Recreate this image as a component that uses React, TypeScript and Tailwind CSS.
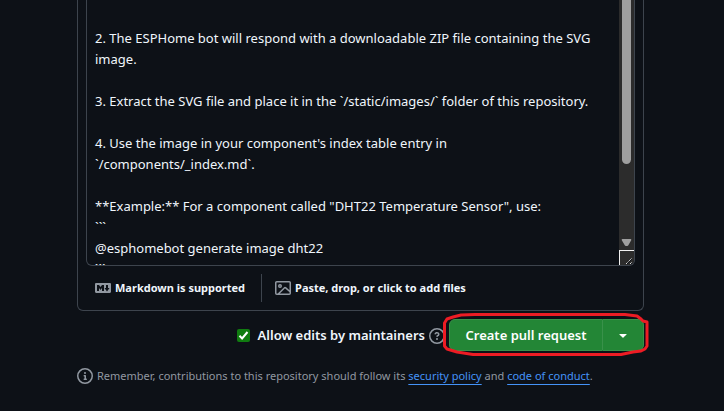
import React from "react";

const body = `
2. The ESPHome bot will respond with a downloadable ZIP file containing the SVG
image.

3. Extract the SVG file and place it in the \`/static/images/\` folder of this repository.

4. Use the image in your component's index table entry in
\`/components/_index.md\`.

**Example:** For a component called "DHT22 Temperature Sensor", use:
\`\`\`
@esphomebot generate image dht22
\`\`\``;

function MarkdownIcon() {
  return (
    <svg viewBox="0 0 16 16" className="size-4 shrink-0" fill="#9198a1" aria-hidden="true">
      <path d="M14.85 3c.63 0 1.15.52 1.14 1.15v7.7c0 .63-.51 1.15-1.15 1.15H1.15C.52 13 0 12.48 0 11.84V4.15C0 3.52.52 3 1.15 3ZM9 11V5H7L5.5 7 4 5H2v6h2V8l1.5 1.92L7 8v3Zm2.99.5L14.5 8H13V5h-2v3H9.5Z" />
    </svg>
  );
}

function ImageIcon() {
  return (
    <svg viewBox="0 0 16 16" className="size-4 shrink-0" fill="#9198a1" aria-hidden="true">
      <path d="M16 13.25A1.75 1.75 0 0 1 14.25 15H1.75A1.75 1.75 0 0 1 0 13.25V2.75C0 1.784.784 1 1.75 1h12.5c.966 0 1.75.784 1.75 1.75ZM1.75 2.5a.25.25 0 0 0-.25.25v10.5c0 .138.112.25.25.25h.94l.03-.03 6.077-6.078a1.75 1.75 0 0 1 2.412-.06L14.5 10.31V2.75a.25.25 0 0 0-.25-.25Zm12.5 11a.25.25 0 0 0 .25-.25v-.917l-4.298-3.889a.25.25 0 0 0-.344.009L4.81 13.5ZM7 6a2 2 0 1 1-3.999.001A2 2 0 0 1 7 6ZM5.5 6a.5.5 0 1 0-1 0 .5.5 0 0 0 1 0Z" />
    </svg>
  );
}

function QuestionIcon() {
  return (
    <svg viewBox="0 0 16 16" className="size-4 shrink-0" fill="#9198a1" aria-hidden="true">
      <path d="M0 8a8 8 0 1 1 16 0A8 8 0 0 1 0 8Zm8-6.5a6.5 6.5 0 1 0 0 13 6.5 6.5 0 0 0 0-13ZM6.92 6.085h.001a.749.749 0 1 1-1.342-.67c.169-.339.436-.701.849-.977C6.845 4.16 7.369 4 8 4a2.756 2.756 0 0 1 1.637.525c.503.377.863.965.863 1.725 0 .448-.115.83-.329 1.15-.205.307-.47.513-.692.662-.109.072-.22.138-.313.195l-.006.004a6.24 6.24 0 0 0-.26.16.952.952 0 0 0-.276.245.75.75 0 0 1-1.248-.832c.184-.264.42-.489.692-.661.103-.067.207-.132.313-.195l.007-.004c.1-.061.182-.11.258-.161a.969.969 0 0 0 .277-.245C8.96 6.514 9 6.427 9 6.25a.612.612 0 0 0-.262-.525A1.27 1.27 0 0 0 8 5.5c-.369 0-.595.09-.74.187a1.01 1.01 0 0 0-.34.398ZM9 11a1 1 0 1 1-2 0 1 1 0 0 1 2 0Z" />
    </svg>
  );
}

function InfoIcon() {
  return (
    <svg viewBox="0 0 16 16" className="size-4 shrink-0" fill="#9198a1" aria-hidden="true">
      <path d="M0 8a8 8 0 1 1 16 0A8 8 0 0 1 0 8Zm8-6.5a6.5 6.5 0 1 0 0 13 6.5 6.5 0 0 0 0-13ZM6.5 7.75A.75.75 0 0 1 7.25 7h1a.75.75 0 0 1 .75.75v2.75h.25a.75.75 0 0 1 0 1.5h-2a.75.75 0 0 1 0-1.5h.25v-2h-.25a.75.75 0 0 1-.75-.75ZM8 6a1 1 0 1 1 0-2 1 1 0 0 1 0 2Z" />
    </svg>
  );
}

function ScrollBar() {
  return (
    <div className="flex w-[15px] shrink-0 flex-col bg-[#2c2c2c]" aria-hidden="true">
      <div className="mx-[3px] h-[164px] rounded-b-full bg-[#9f9f9f]" />
      <div className="flex-1" />
      <svg viewBox="0 0 15 11" className="mb-0.5 h-[11px] w-[15px]">
        <path d="M3.500 2h8q1.200 0 .7 1.200L9.500 8q-.4 1-1.400 1H7q-1 0-1.400-1L2.800 3.200Q2.300 2 3.500 2Z" fill="#9f9f9f" />
      </svg>
      <svg viewBox="0 0 15 15" className="size-[15px] rounded-br-md bg-[#2c2c2c]" fill="none">
        <path d="M0 .5H15M.5 0V15" stroke="#f0f0f0" />
        <path d="M7 14 13 8M11 14l2-2" stroke="#e0e0e0" strokeDasharray="1.400 .6" />
        <path d="M8 14 13 9M12 14l1-1" stroke="#0d1117" />
      </svg>
    </div>
  );
}

export default function App() {
  return (
    <main className="min-h-screen bg-[#0d1117] pr-20 pl-[77px] font-['Noto_Sans','Open_Sans',sans-serif] text-sm text-[#f0f6fc]">
      <section className="rounded-b-md border-x border-b border-[#3d444d] px-2">
        <div className="flex overflow-hidden rounded-b-md border-x border-b border-[#3d444d]">
          <textarea
            aria-label="Pull request description"
            defaultValue={"\n" + body.slice(1)}
            wrap="off"
            className="block h-[265px] min-w-0 flex-1 resize-none overflow-hidden bg-transparent px-2 pt-[7px] text-[13px] leading-[21px] outline-none"
          />
          <ScrollBar />
        </div>
        <div className="flex h-11 items-center pl-[9px] text-[11px] font-bold">
          <button type="button" className="flex items-center gap-1">
            <MarkdownIcon />
            Markdown is supported
          </button>
          <div className="mr-[13px] ml-4 h-7 w-px bg-[#3d444d]" />
          <label className="flex items-center gap-1">
            <ImageIcon />
            Paste, drop, or click to add files
            <input type="file" className="sr-only" />
          </label>
        </div>
      </section>

      <div className="mt-2 flex items-center justify-end">
        <input
          id="maintainers"
          type="checkbox"
          defaultChecked
          className="size-[13px] appearance-none rounded-xs bg-[#107c10]"
        />
        <svg viewBox="0 0 13 13" className="pointer-events-none -ml-[13px] size-[13px]" fill="none" aria-hidden="true">
          <path d="M2.500 6.800 5.100 9.500 10.500 3" stroke="#fff" strokeWidth="2" />
        </svg>
        <label htmlFor="maintainers" className="mr-1 ml-2 text-[13px] font-semibold">
          Allow edits by maintainers
        </label>
        <a href="#help" aria-label="About maintainer edits" className="pt-0.5">
          <QuestionIcon />
        </a>
        <div className="relative ml-1 flex h-8 text-[13px] font-semibold text-white">
          <button type="button" className="w-[154px] rounded-l-md border border-[#39914a] bg-[#238636]">
            Create pull request
          </button>
          <button
            type="button"
            aria-label="More options"
            className="flex w-[41px] items-center justify-center rounded-r-md border border-l-0 border-[#39914a] bg-[#238636]"
          >
            <svg viewBox="0 0 16 16" className="size-4" fill="#fff" aria-hidden="true">
              <path d="m4.427 7.427 3.396 3.396a.25.25 0 0 0 .354 0l3.396-3.396A.25.25 0 0 0 11.396 7H4.604a.25.25 0 0 0-.177.427Z" />
            </svg>
          </button>
          <svg
            viewBox="0 0 207 46"
            className="pointer-events-none absolute -top-[7px] -left-1.5 h-[46px] w-[207px] max-w-none"
            fill="none"
            aria-hidden="true"
          >
            <path
              d="M10 5 18 3 32 2.500H182L194 4 198 7 200 9 204 10V34L202 37 198 39 190 40 178 42.500H30L14 40 4 37 1.500 34V11L4 7Z"
              stroke="#ed1c24"
              strokeWidth="3"
              strokeLinejoin="round"
            />
          </svg>
        </div>
      </div>

      <p className="mt-4 flex items-center gap-1 text-[11px] leading-[18px] whitespace-nowrap text-[#9198a1]">
        <InfoIcon />
        <span>
          Remember, contributions to this repository should follow its{" "}
          <a href="#security" className="text-[#4493f8] underline underline-offset-4">
            security policy
          </a>{" "}
          and{" "}
          <a href="#conduct" className="text-[#4493f8] underline underline-offset-4">
            code of conduct
          </a>
          .
        </span>
      </p>
    </main>
  );
}
